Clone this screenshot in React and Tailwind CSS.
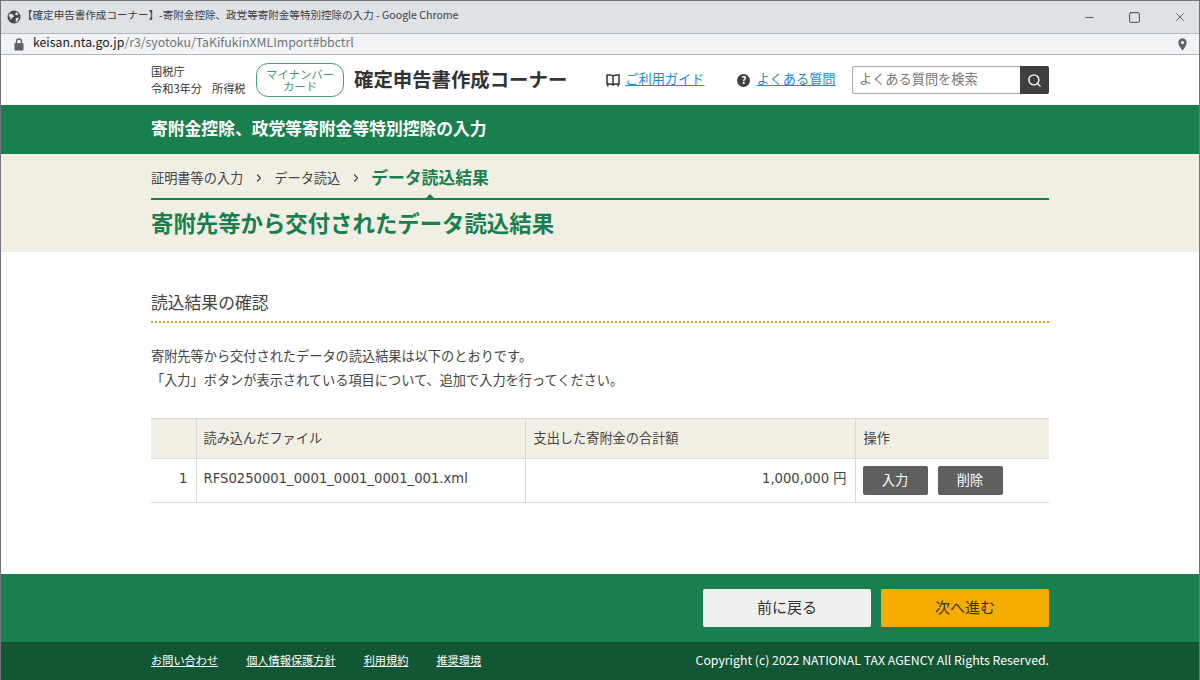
import React from "react";
import { Minus, Square, X, Search, ChevronRight } from "lucide-react";

const latin = "font-['DejaVu_Sans','Noto_Sans_CJK_JP',sans-serif] text-[13.2px]";

function ChromeBars() {
  return (
    <div className="shrink-0">
      <div className="h-[34px] bg-[#dee1e6] border-t border-t-[#70757a] border-b border-b-[#b4b6b9] flex items-center pl-[6px] pr-[12px]">
        <svg width="14" height="14" viewBox="0 0 14 14" className="shrink-0">
          <circle cx="7" cy="7" r="6.5" fill="#45494d" />
          <path d="M3 3.5l3 1 1 2-2 1.5-1.5 2-.5-3L1.5 6zM9 2l2.5 2-1.5 1.5-2-1zM9 8l3-.5-1.5 4-2 .5z" fill="#dee1e6" />
        </svg>
        <span className="ml-[1px] pb-[4px] text-[10.55px] text-[#3c4043] whitespace-nowrap">【確定申告書作成コーナー】-寄附金控除、政党等寄附金等特別控除の入力 - Google Chrome</span>
        <div className="ml-auto flex items-center gap-[32px] text-[#3c4043]">
          <Minus size={13} strokeWidth={1.5} />
          <Square size={13} strokeWidth={1.7} />
          <X size={14} strokeWidth={1.3} />
        </div>
      </div>
      <div className="h-[21px] bg-[#f1f3f4] border-b border-b-[#b4b6b9] flex items-center pl-[13px] pr-[12px]">
        <svg width="10" height="13" viewBox="0 0 10 13" className="shrink-0">
          <path d="M2.5 5V3.5a2.5 2.5 0 0 1 5 0V5" fill="none" stroke="#5f6368" strokeWidth="1.3" />
          <rect x="0.5" y="5" width="9" height="7.5" rx="1" fill="#5f6368" />
        </svg>
        <span className="ml-[9px] pb-[4px] text-[12.3px] leading-none text-[#70757a] whitespace-nowrap"><span className="text-[#202124]">keisan.nta.go.jp</span>/r3/syotoku/TaKifukinXMLImport#bbctrl</span>
        <svg width="9" height="13" viewBox="0 0 9 13" className="ml-auto shrink-0">
          <path d="M4.5 0.3A4.2 4.2 0 0 0 0.3 4.5C0.3 7.6 4.5 12.7 4.5 12.7S8.7 7.6 8.7 4.5A4.2 4.2 0 0 0 4.5 0.3Z" fill="#5f6368" />
          <circle cx="4.5" cy="4.5" r="1.6" fill="#f1f3f4" />
        </svg>
      </div>
    </div>
  );
}

function Header() {
  return (
    <div className="h-[50px] bg-white shrink-0">
      <div className="w-[898px] mx-auto h-full flex items-center">
        <div className="text-[11.2px] leading-[17px] text-[#333] w-[105px] whitespace-nowrap">
          <div>国税庁</div>
          <div>令和3年分<span className="ml-[10px]">所得税</span></div>
        </div>
        <div className="w-[88px] h-[34px] border-[1.5px] border-[#4a9d78] rounded-[12px] text-[11.4px] leading-[12px] text-[#3f9a70] flex flex-col items-center justify-center">
          <span>マイナンバー</span>
          <span>カード</span>
        </div>
        <div className="ml-[10px] pb-[2px] text-[19.4px] font-bold text-[#333] whitespace-nowrap">確定申告書作成コーナー</div>
        <svg width="14" height="13" viewBox="0 0 14 13" className="ml-[39px] shrink-0" fill="none" stroke="#333" strokeWidth="1.5">
          <path d="M7 2.2C6.4 1.3 5.3 1 4 1H1v9h3.5c1 0 2 .3 2.5 1 .5-.7 1.5-1 2.5-1H13V1h-3c-1.3 0-2.4.3-3 1.2ZM7 2.2V11M1.8 10v2.5M12.2 10v2.5" />
        </svg>
        <a className="ml-[5px] pb-[2px] text-[13.2px] text-[#1a8ccf] underline whitespace-nowrap">ご利用ガイド</a>
        <div className="ml-[33px] w-[13px] h-[13px] rounded-full bg-[#3f3f3f] text-white text-[10px] font-bold leading-none flex items-center justify-center">?</div>
        <a className="ml-[6px] pb-[2px] text-[13.2px] text-[#1a8ccf] underline whitespace-nowrap">よくある質問</a>
        <div className="ml-auto flex h-[28px]">
          <div className="w-[168px] border border-[#aaa] border-r-0 rounded-l-[2px] pl-[6px] pb-[2px] text-[13.2px] text-[#777] flex items-center">よくある質問を検索</div>
          <div className="w-[29px] bg-[#3f3f3f] rounded-r-[2px] flex items-center justify-center">
            <Search size={15} strokeWidth={2.2} className="text-white" />
          </div>
        </div>
      </div>
    </div>
  );
}

function TitleBand() {
  return (
    <>
      <div className="h-[49px] bg-[#1a7f4e] shrink-0">
        <div className="w-[898px] mx-auto h-full flex items-center pb-[2px] text-[16.8px] font-bold text-white">寄附金控除、政党等寄附金等特別控除の入力</div>
      </div>
      <div className="h-[98px] bg-[#f1efe4] shrink-0">
        <div className="w-[898px] mx-auto">
          <div className="h-[46px] border-b-2 border-[#1a7f4e] flex items-center pt-[3px] text-[13.2px] text-[#444] relative">
            <span>証明書等の入力</span>
            <ChevronRight size={12} strokeWidth={2.4} className="ml-[10px] mr-[9px]" />
            <span>データ読込</span>
            <ChevronRight size={12} strokeWidth={2.4} className="ml-[10px] mr-[9px]" />
            <span className="text-[16.8px] font-bold text-[#1a7f4e]">データ読込結果</span>
            <span className="absolute left-[275px] bottom-0 w-0 h-0 border-x-[4px] border-x-transparent border-b-[4px] border-b-[#1a7f4e]" />
          </div>
          <h1 className="mt-[6px] text-[22.4px] leading-[32px] font-bold text-[#1a7f4e]">寄附先等から交付されたデータ読込結果</h1>
        </div>
      </div>
    </>
  );
}

function ResultTable() {
  return (
    <table className="w-full mt-[26px] border-collapse table-fixed text-[13.2px] text-[#444]">
      <colgroup>
        <col className="w-[45px]" />
        <col className="w-[329px]" />
        <col className="w-[330px]" />
        <col />
      </colgroup>
      <thead>
        <tr className="h-[40px] bg-[#f1efe4] border-y border-[#d9d9d9]">
          <th className="border-r border-[#d9d9d9]" />
          <th className="border-r border-[#d9d9d9] pl-[7px] pb-[2px] text-left font-normal">読み込んだファイル</th>
          <th className="border-r border-[#d9d9d9] pl-[8px] pb-[2px] text-left font-normal">支出した寄附金の合計額</th>
          <th className="pl-[8px] pb-[2px] text-left font-normal">操作</th>
        </tr>
      </thead>
      <tbody>
        <tr className="h-[44px] border-b border-[#d9d9d9]">
          <td className={`border-r border-[#d9d9d9] pr-[8px] pt-[10px] align-top text-right ${latin}`}>1</td>
          <td className={`border-r border-[#d9d9d9] pl-[7px] pt-[10px] align-top ${latin}`}>RFS0250001_0001_0001_0001_001.xml</td>
          <td className={`border-r border-[#d9d9d9] pr-[8px] pt-[10px] align-top text-right ${latin}`}>1,000,000 円</td>
          <td className="pl-[7px] align-middle">
            <div className="flex gap-[10px]">
              <button className="w-[65px] h-[29px] pb-[2px] rounded-[2px] bg-[#5f5f5f] text-white text-[13.2px]">入力</button>
              <button className="w-[65px] h-[29px] pb-[2px] rounded-[2px] bg-[#5f5f5f] text-white text-[13.2px]">削除</button>
            </div>
          </td>
        </tr>
      </tbody>
    </table>
  );
}

function Footer() {
  return (
    <div className="shrink-0">
      <div className="h-[68px] bg-[#1a7f4e]">
        <div className="w-[898px] mx-auto h-full flex items-center justify-end gap-[10px]">
          <button className="w-[168px] h-[38px] pb-[2px] rounded-[2px] bg-[#efefef] text-[15px] text-[#333]">前に戻る</button>
          <button className="w-[168px] h-[38px] pb-[2px] rounded-[2px] bg-[#f5ae00] text-[15px] text-[#333]">次へ進む</button>
        </div>
      </div>
      <div className="h-[38px] bg-[#135634]">
        <div className="w-[898px] mx-auto h-full flex items-center pb-[2px] text-[11.2px] text-white">
          <a className="underline">お問い合わせ</a>
          <a className="underline ml-[28px]">個人情報保護方針</a>
          <a className="underline ml-[28px]">利用規約</a>
          <a className="underline ml-[28px]">推奨環境</a>
          <span className="ml-auto text-[12.3px] whitespace-nowrap">Copyright (c) 2022 NATIONAL TAX AGENCY All Rights Reserved.</span>
        </div>
      </div>
    </div>
  );
}

export default function App() {
  return (
    <div className="w-[1200px] h-[680px] overflow-hidden flex flex-col bg-white border-x border-[#70757a] font-['Noto_Sans_CJK_JP','Open_Sans',sans-serif]">
      <ChromeBars />
      <Header />
      <TitleBand />
      <div className="flex-1 min-h-0">
        <div className="w-[898px] mx-auto pt-[40px]">
          <div className="h-[31px] border-b-2 border-dotted border-[#e39a1c] text-[16.8px] leading-[20px] text-[#444]">読込結果の確認</div>
          <div className="mt-[21px] text-[13.2px] leading-[24px] text-[#444]">
            <p>寄附先等から交付されたデータの読込結果は以下のとおりです。</p>
            <p>「入力」ボタンが表示されている項目について、追加で入力を行ってください。</p>
          </div>
          <ResultTable />
        </div>
      </div>
      <Footer />
    </div>
  );
}
